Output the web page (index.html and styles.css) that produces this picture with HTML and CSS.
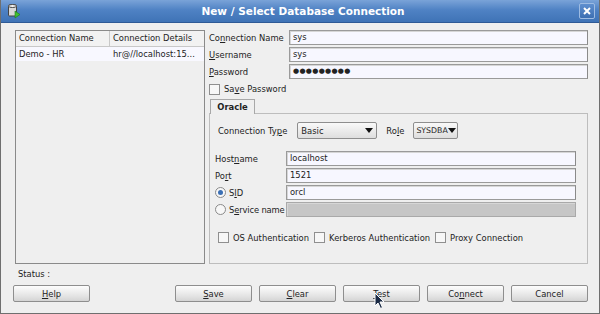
FILE: index.html
```html
<!DOCTYPE html>
<html>
<head>
<meta charset="utf-8">
<link rel="stylesheet" href="styles.css">
</head>
<body>
<div class="window">
  <div class="titlebar">
    <svg class="appicon" width="14" height="16" viewBox="0 0 14 16">
      <rect x="1.5" y="2" width="8" height="11" rx="1" fill="#d8d8d8" stroke="#444" stroke-width="1"/>
      <ellipse cx="5.5" cy="3" rx="4" ry="1.5" fill="#f4f4f4" stroke="#444" stroke-width="1"/>
      <path d="M8 8 L13 11.5 L8 15 Z" fill="#3fbf2f" stroke="#1d7a14" stroke-width="0.6"/>
    </svg>
    <div class="title">New / Select Database Connection</div>
    <div class="close">
      <svg width="10" height="10" viewBox="0 0 10 10"><path d="M2 2 L8 8 M8 2 L2 8" stroke="#fff" stroke-width="2"/></svg>
    </div>
  </div>
  <div class="content">
    <div class="main">
      <div class="table">
        <div class="thead">
          <div class="th c1">Connection Name</div>
          <div class="th c2">Connection Details</div>
        </div>
        <div class="trow">
          <div class="td c1">Demo - HR</div>
          <div class="td c2">hr@//localhost:15...</div>
        </div>
      </div>
      <div class="form">
        <div class="grid top">
          <label>Co<u>n</u>nection Name</label><div class="input">sys</div>
          <label><u>U</u>sername</label><div class="input">sys</div>
          <label><u>P</u>assword</label><div class="input dots">●●●●●●●●●</div>
        </div>
        <div class="check savepw"><span class="box"></span><span>Sa<u>v</u>e Password</span></div>
        <div class="tabs"><div class="tab">Oracle</div></div>
        <div class="tabpanel">
          <div class="typerow">
            <span>Connection Ty<u>p</u>e</span>
            <div class="select wide"><span>Basic</span><span class="arrow"></span></div>
            <span class="role">Ro<u>l</u>e</span>
            <div class="select narrow"><span>SYSDBA</span><span class="arrow"></span></div>
          </div>
          <div class="grid inner">
            <label>Host<u>n</u>ame</label><div class="input">localhost</div>
            <label>Po<u>r</u>t</label><div class="input">1521</div>
            <label class="radio"><span class="rb on"></span><span>S<u>I</u>D</span></label><div class="input">orcl</div>
            <label class="radio"><span class="rb"></span><span class="tight">S<u>e</u>rvice name</span></label><div class="input disabled"></div>
          </div>
          <div class="checks">
            <div class="check"><span class="box"></span><span>OS Authentication</span></div>
            <div class="check"><span class="box"></span><span>Kerberos Authentication</span></div>
            <div class="check"><span class="box"></span><span>Proxy Connection</span></div>
          </div>
        </div>
      </div>
    </div>
    <div class="status">Status :</div>
    <div class="buttons">
      <button class="btn"><u>H</u>elp</button>
      <div class="spacer"></div>
      <button class="btn"><u>S</u>ave</button>
      <button class="btn"><u>C</u>lear</button>
      <button class="btn"><u>T</u>est</button>
      <button class="btn">Co<u>n</u>nect</button>
      <button class="btn">Cancel</button>
    </div>
  </div>
  <svg class="cursor" width="12" height="18" viewBox="0 0 12 18">
    <path d="M1 1 L1 14 L4 11 L6.5 16.5 L8.5 15.5 L6 10 L10 10 Z" fill="#1a2a44" stroke="#fff" stroke-width="1"/>
  </svg>
</div>
</body>
</html>
```

FILE: styles.css
```css
* { box-sizing: border-box; }
html, body { margin: 0; padding: 0; background: #e9e6df; }
body {
  font-family: "DejaVu Sans", sans-serif;
  font-size: 8.4px;
  color: #222;
}
.window {
  position: relative;
  width: 600px;
  height: 314px;
  background: #efefef;
  border: 1px solid #6f6f6f;
  border-top: none;
  overflow: hidden;
}
.titlebar {
  height: 23px;
  display: flex;
  align-items: center;
  padding: 0 4px 0 6px;
  background: linear-gradient(#7aa3d8 0%, #4f82c4 45%, #3f73b6 100%);
  border-bottom: 1px solid #2e5a96;
}
.appicon { flex: none; }
.title {
  flex: 1;
  text-align: center;
  color: #fff;
  font-weight: bold;
  font-size: 10.5px;
  padding-left: 6px;
}
.close {
  width: 16px;
  height: 16px;
  border: 1px solid #9dbbe2;
  border-radius: 2px;
  background: linear-gradient(#5f8fcf, #3d6fb2);
  display: flex;
  align-items: center;
  justify-content: center;
}
.content {
  padding: 7px 11px 0 14px;
}
.main {
  display: flex;
  gap: 4px;
  height: 234px;
}
.table {
  width: 190px;
  border: 1px solid #8a8a8a;
  background: #efefef;
  flex: none;
}
.thead, .trow { display: flex; }
.thead { height: 16px; border-bottom: 1px solid #c8c8c8; background: #f2f2f2; }
.trow { height: 14px; background: #f8f8ff; }
.th, .td { padding-left: 3px; line-height: 15px; white-space: nowrap; overflow: hidden; }
.td { line-height: 14px; }
.c1 { width: 94px; }
.c2 { flex: 1; }
.th.c1 { border-right: 1px solid #c8c8c8; }
.form {
  flex: 1;
  display: flex;
  flex-direction: column;
}
.grid {
  display: grid;
  row-gap: 2px;
  align-items: center;
}
.grid.top { grid-template-columns: 80px 1fr; }
.grid label { white-space: nowrap; }
.input {
  height: 15px;
  border: 1px solid #9a9a9a;
  border-right-color: #8a8a8a;
  box-shadow: inset 1px 1px 0 #d6d6d6;
  background: #f7f7ff;
  padding-left: 3px;
  line-height: 13px;
}
.input.dots { font-size: 7px; letter-spacing: 0.3px; }
.input.disabled { background: #c6c6c6; border-color: #a9a9a9; }
.check { display: flex; align-items: center; gap: 4px; white-space: nowrap; }
.box {
  flex: none;
  width: 11px; height: 11px;
  border: 1px solid #8f8f8f;
  background: #f7f7f7;
  display: inline-block;
}
.savepw { margin-top: 3px; height: 14px; }
.tabs { display: flex; margin-top: 2px; padding-left: 1px; }
.tab {
  width: 45px;
  height: 15px;
  border: 1px solid #a8a8a8;
  border-bottom: none;
  background: #efefef;
  font-weight: bold;
  text-align: center;
  line-height: 14px;
  position: relative;
  top: 1px;
}
.tabpanel {
  flex: 1;
  border: 1px solid #bdbdbd;
  padding: 8px 11px 0 5px;
}
.typerow {
  display: flex;
  align-items: center;
  height: 17px;
  padding-left: 3px;
}
.select {
  height: 17px;
  border: 1px solid #8e8e8e;
  border-radius: 2px;
  background: linear-gradient(#f9f9f9, #dedede);
  display: flex;
  align-items: center;
  justify-content: space-between;
  padding: 0 3px;
  margin-left: 9px;
}
.select.wide { width: 80px; margin-left: 10px; }
.select.narrow { width: 45px; padding: 0 2px 0 2px; font-size: 7.8px; }
.arrow {
  flex: none;
  width: 0; height: 0;
  border-left: 4px solid transparent;
  border-right: 4px solid transparent;
  border-top: 5px solid #111;
}
.role { margin-left: 9px; }
.grid.inner {
  grid-template-columns: 71px 1fr;
  margin-top: 12px;
}
.radio { display: flex; align-items: center; gap: 3px; }
.tight { letter-spacing: -0.15px; }
.rb {
  flex: none;
  width: 11px; height: 11px;
  border-radius: 50%;
  border: 1px solid #8a8a8a;
  background: #f7f7f7;
  display: inline-flex;
  align-items: center;
  justify-content: center;
}
.rb.on::after {
  content: "";
  width: 5px; height: 5px;
  border-radius: 50%;
  background: #3b6fb4;
}
.checks {
  display: flex;
  gap: 5px;
  margin-top: 15px;
  padding-left: 3px;
}
.status { margin-top: 4px; padding-left: 3px; height: 12px; line-height: 12px; }
.buttons {
  display: flex;
  gap: 7px;
  margin-top: 5px;
  margin-left: -2px;
}
.spacer { width: 71px; flex: none; }
.btn {
  flex: none;
  width: 77px;
  height: 17px;
  font-family: "DejaVu Sans", sans-serif;
  font-size: 8.4px;
  color: #222;
  border: 1px solid #8e8e8e;
  border-radius: 2px;
  background: linear-gradient(#fdfdfd, #e2e2e2 70%, #d4d4d4);
  padding: 0;
}
.cursor { position: absolute; left: 373px; top: 292px; }
```
